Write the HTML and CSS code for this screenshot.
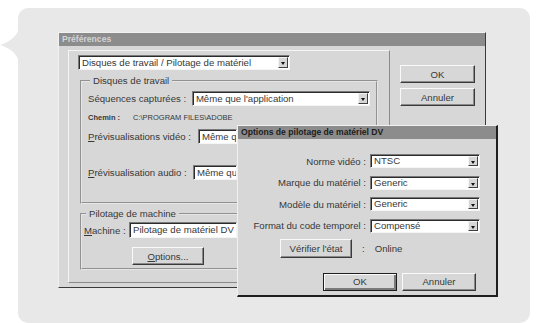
FILE: index.html
```html
<!DOCTYPE html>
<html lang="fr">

<head>
    <meta charset="UTF-8">
    <meta name="viewport" content="width=device-width, initial-scale=1.0">
    <title>Préférences</title>
    <link rel="stylesheet" href="styles.css">
</head>

<body>
    <div class="panel">
        <svg class="pointer" width="19" height="34" viewBox="0 0 19 34">
            <path d="M19 0 Q16 12 0 17 Q16 22 19 34 Z" fill="#e8e8e8" />
        </svg>

        <div class="win prefs">
            <div class="titlebar light">Préférences</div>
            <div class="prefs-body">
                <div class="frame">
                    <div class="select top-select">
                        <span>Disques de travail / Pilotage de matériel</span>
                        <i class="arrow"></i>
                    </div>

                    <fieldset class="group g1">
                        <legend>Disques de travail</legend>
                        <div class="row r-seq">
                            <label>Séquences capturées :</label>
                            <div class="select seq-field">
                                <span>Même que l'application</span>
                                <i class="arrow"></i>
                            </div>
                        </div>
                        <div class="row r-path">
                            <b>Chemin :</b>
                            <span>C:\PROGRAM FILES\ADOBE</span>
                        </div>
                        <div class="row r-video">
                            <label><u>P</u>révisualisations vidéo :</label>
                            <div class="select video-field"><span>Même que l'application</span></div>
                        </div>
                        <div class="row r-audio">
                            <label><u>P</u>révisualisation audio :</label>
                            <div class="select audio-field"><span>Même que l'application</span></div>
                        </div>
                    </fieldset>

                    <fieldset class="group g2">
                        <legend>Pilotage de machine</legend>
                        <div class="row r-machine">
                            <label><u>M</u>achine :</label>
                            <div class="select machine-field"><span>Pilotage de matériel DV</span></div>
                        </div>
                        <button class="btn options"><u>O</u>ptions...</button>
                    </fieldset>
                </div>

                <div class="side">
                    <button class="btn">OK</button>
                    <button class="btn">Annuler</button>
                </div>
            </div>
        </div>

        <div class="win dv">
            <div class="titlebar">Options de pilotage de matériel DV</div>
            <div class="dv-body">
                <div class="dv-grid">
                    <label>Norme vidéo :</label>
                    <div class="select"><span>NTSC</span><i class="arrow"></i></div>
                    <label>Marque du matériel :</label>
                    <div class="select"><span>Generic</span><i class="arrow"></i></div>
                    <label>Modèle du matériel :</label>
                    <div class="select"><span>Generic</span><i class="arrow"></i></div>
                    <label>Format du code temporel :</label>
                    <div class="select"><span>Compensé</span><i class="arrow"></i></div>
                </div>
                <div class="check-row">
                    <button class="btn check">Vérifier l'état</button>
                    <span class="colon">:</span>
                    <span class="status">Online</span>
                </div>
                <div class="dv-actions">
                    <button class="btn default">OK</button>
                    <button class="btn">Annuler</button>
                </div>
            </div>
        </div>
    </div>
</body>

</html>
```

FILE: styles.css
```css
* {
    margin: 0;
    padding: 0;
    box-sizing: border-box;
}

body {
    background: #fff;
    font-family: "Liberation Sans", Arial, sans-serif;
    font-size: 9.6px;
    color: #383838;
}

.panel {
    position: relative;
    margin: 8px 10px 0 18px;
    height: 315px;
    background: #e8e8e8;
    border-radius: 10px;
    padding: 24px 0 0 40px;
}

.pointer {
    position: absolute;
    left: -18px;
    top: 20px;
}

/* windows */
.win {
    background: #d7d7d7;
    border: 1px solid;
    border-color: #f2f2f2 #3a3a3a #3a3a3a #f2f2f2;
}

.titlebar {
    height: 13px;
    line-height: 13px;
    padding-left: 3px;
    background: #8c8c8c;
    font-size: 8.6px;
    font-weight: bold;
    color: #1c1c1c;
    white-space: nowrap;
    overflow: hidden;
}

.titlebar.light {
    color: #d4d4d4;
}

.prefs {
    width: 428px;
    height: 256px;
}

.prefs-body {
    display: flex;
    padding: 4px 0 0 9px;
}

.frame {
    width: 322px;
    height: 233px;
    padding: 4px 11px 0 11px;
    border: 1px solid;
    border-color: #f4f4f4 #8a8a8a #8a8a8a #f4f4f4;
}

.side {
    display: flex;
    flex-direction: column;
    gap: 5px;
    margin-left: 10px;
    padding-top: 15px;
}

.side .btn {
    width: 75px;
    height: 18px;
}

/* fields */
.select {
    position: relative;
    height: 15px;
    line-height: 13px;
    background: #fff;
    border: 1px solid;
    border-color: #7a7a7a #f5f5f5 #f5f5f5 #7a7a7a;
    box-shadow: inset 1px 1px #2c2c2c;
    padding-left: 3px;
    white-space: nowrap;
    overflow: hidden;
}

.arrow {
    position: absolute;
    right: 1px;
    top: 1px;
    bottom: 1px;
    width: 10px;
    background: #d7d7d7;
    border: 1px solid;
    border-color: #f4f4f4 #404040 #404040 #f4f4f4;
}

.arrow::after {
    content: "";
    position: absolute;
    left: 2px;
    top: 4px;
    border: 2px solid transparent;
    border-top: 3px solid #111;
}

.top-select {
    width: 212px;
    margin-left: -2px;
}

/* group boxes */
.group {
    border: 2px groove #e6e6e6;
    padding: 0 6px;
    min-width: 0;
}

.group legend {
    padding: 0 3px;
    line-height: 11px;
    margin-left: 2px;
}

.g1 {
    margin-top: 5px;
    height: 129px;
}

.g2 {
    margin-top: 4px;
    height: 62px;
    padding-left: 2px;
}

.row {
    display: flex;
    align-items: center;
    white-space: nowrap;
}

.r-seq {
    margin-top: 5px;
}

.r-seq label {
    width: 105px;
}

.seq-field {
    width: 180px;
}

.r-path {
    margin-top: 5px;
    height: 12px;
    font-size: 7.5px;
}

.r-path b {
    width: 45px;
}

.r-video {
    margin-top: 6px;
}

.r-video label {
    width: 110px;
}

/* cut where the DV dialog covers them */
.video-field {
    width: 39px;
}

.audio-field {
    width: 44px;
}

.r-audio {
    margin-top: 21px;
}

.r-audio label {
    width: 105px;
}

.r-machine {
    margin-top: 3px;
}

.r-machine label {
    width: 45px;
}

.machine-field {
    width: 108px;
    height: 16px;
    line-height: 14px;
}

/* buttons */
.btn {
    display: block;
    font-family: inherit;
    font-size: 9.6px;
    color: #383838;
    background: #d7d7d7;
    border: 1px solid;
    border-color: #fafafa #3a3a3a #3a3a3a #fafafa;
    box-shadow: inset -1px -1px #8a8a8a;
}

.options {
    width: 72px;
    height: 18px;
    margin: 9px 0 0 48px;
}

/* DV dialog */
.dv {
    position: absolute;
    left: 219px;
    top: 117px;
    width: 261px;
    height: 172px;
    border-right-width: 2px;
    border-bottom-width: 2px;
    border-color: #f0f0f0 #1e1e1e #1e1e1e #f0f0f0;
}

.dv-body {
    padding: 15px 0 0 0;
}

.dv-grid {
    display: grid;
    grid-template-columns: 132px 110px;
    row-gap: 7.5px;
    align-items: center;
}

.dv-grid label {
    text-align: right;
    padding-right: 4px;
    white-space: nowrap;
}

.dv-grid .select {
    height: 14px;
    line-height: 12px;
}

.check-row {
    display: flex;
    align-items: center;
    margin-top: 6px;
}

.check {
    width: 72px;
    height: 19px;
    margin-left: 42px;
}

.colon {
    margin-left: 10px;
}

.status {
    margin-left: 10px;
}

.dv-actions {
    display: flex;
    gap: 5px;
    margin: 15px 0 0 85px;
}

.dv-actions .btn {
    width: 74px;
    height: 18px;
}

.btn.default {
    border-color: #1e1e1e;
    box-shadow: inset 1px 1px #fafafa, inset -2px -2px #7a7a7a;
}
```
